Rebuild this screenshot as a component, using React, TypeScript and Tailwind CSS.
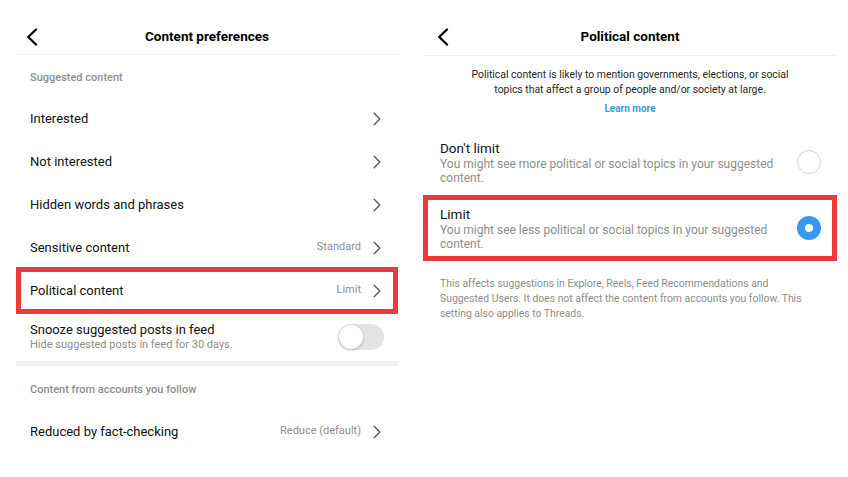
import React from "react";

const Chevron = () => (
  <svg width="8" height="14" viewBox="0 0 8 14" fill="none" className="shrink-0">
    <path d="M1.2 1.2 L6.8 7 L1.2 12.8" stroke="#5a5a5a" strokeWidth="1.4" strokeLinecap="round" strokeLinejoin="round" />
  </svg>
);

const Back = () => (
  <svg width="12" height="18" viewBox="0 0 12 18" fill="none">
    <path d="M10 1.5 L2.2 9 L10 16.5" stroke="#000" strokeWidth="2.3" strokeLinecap="round" strokeLinejoin="round" />
  </svg>
);

function Row({ label, value, highlight }: { label: string; value?: string; highlight?: boolean }) {
  return (
    <div className="relative flex h-[43px] items-center px-[14px]">
      <span className="flex-1 text-[13px] text-[#111]">{label}</span>
      {value && <span className="mr-[12px] text-[11px] text-[#8e8e8e]">{value}</span>}
      <span className="mr-[3px]">
        <Chevron />
      </span>
      {highlight && (
        <span className="pointer-events-none absolute inset-x-0 -inset-y-[2px] border-[5px] border-[#ea3a3f]" />
      )}
    </div>
  );
}

function Left() {
  return (
    <div className="w-[414px] shrink-0 px-4">
      <div className="mt-[18px] grid h-[37px] grid-cols-[40px_1fr_40px] items-center border-b border-[#efefef]">
        <span className="pl-[10px] pt-[2px]">
          <Back />
        </span>
        <span className="pt-[1px] text-center text-[13.5px] font-bold text-black">Content preferences</span>
        <span />
      </div>
      <div className="flex h-[42px] items-center px-[14px] pt-[4px] text-[11px] font-medium text-[#8e8e8e]">
        Suggested content
      </div>
      <Row label="Interested" />
      <Row label="Not interested" />
      <Row label="Hidden words and phrases" />
      <Row label="Sensitive content" value="Standard" />
      <Row label="Political content" value="Limit" highlight />
      <div className="flex h-[49px] items-center px-[14px]">
        <div className="flex flex-1 flex-col">
          <span className="text-[13px] leading-[16px] text-[#111]">Snooze suggested posts in feed</span>
          <span className="text-[11px] leading-[14px] text-[#8e8e8e]">Hide suggested posts in feed for 30 days.</span>
        </div>
        <div className="relative h-[26px] w-[46px] rounded-full bg-[#e3e3e3]">
          <span className="absolute left-[1px] top-[1px] h-[24px] w-[24px] rounded-full bg-white shadow-[0_1px_3px_rgba(0,0,0,0.25)]" />
        </div>
      </div>
      <div className="h-[5px] bg-[#f2f2f2]" />
      <div className="flex h-[44px] items-center px-[14px] pt-[4px] text-[11px] font-medium text-[#8e8e8e]">
        Content from accounts you follow
      </div>
      <Row label="Reduced by fact-checking" value="Reduce (default)" />
    </div>
  );
}

function Option({
  title,
  lines,
  selected,
}: {
  title: string;
  lines: [string, string];
  selected?: boolean;
}) {
  return (
    <div className="relative flex h-[66px] items-center pl-[16px] pr-[15px]">
      <div className="flex flex-1 flex-col">
        <span className="text-[13.5px] leading-[17px] text-[#111]">{title}</span>
        <span className="text-[12px] leading-[14px] text-[#8e8e8e]">
          {lines[0]}
          <br />
          {lines[1]}
        </span>
      </div>
      {selected ? (
        <span className="flex h-[24px] w-[24px] items-center justify-center rounded-full bg-[#3897f0]">
          <span className="h-[8px] w-[8px] rounded-full bg-white" />
        </span>
      ) : (
        <span className="h-[24px] w-[24px] rounded-full border-[1.5px] border-[#d4d4d4]" />
      )}
      {selected && (
        <span className="pointer-events-none absolute -left-[1px] -right-[1px] inset-y-0 border-[5px] border-[#ea3a3f]" />
      )}
    </div>
  );
}

function Right() {
  return (
    <div className="w-[412px] shrink-0">
      <div className="mt-[18px] grid h-[38px] grid-cols-[40px_1fr_40px] items-center border-b border-[#efefef]">
        <span className="pl-[13px]">
          <Back />
        </span>
        <span className="text-center text-[13.5px] font-bold text-black">Political content</span>
        <span />
      </div>
      <div className="pt-[11px] text-center text-[10.4px] leading-[15px] text-[#262626]">
        Political content is likely to mention governments, elections, or social
        <br />
        topics that affect a group of people and/or society at large.
      </div>
      <div className="mt-[4px] text-center text-[10px] font-bold leading-[15px] text-[#3a9ad6]">Learn more</div>
      <div className="mt-[13px]">
        <Option
          title="Don't limit"
          lines={["You might see more political or social topics in your suggested", "content."]}
        />
        <Option
          title="Limit"
          lines={["You might see less political or social topics in your suggested", "content."]}
          selected
        />
      </div>
      <div className="mt-[15px] px-[16px] text-[10.4px] leading-[15px] text-[#8e8e8e]">
        This affects suggestions in Explore, Reels, Feed Recommendations and
        <br />
        Suggested Users. It does not affect the content from accounts you follow. This
        <br />
        setting also applies to Threads.
      </div>
    </div>
  );
}

export default function App() {
  return (
    <div className="flex h-[477px] w-[848px] gap-[10px] overflow-hidden bg-white font-['Roboto',sans-serif] antialiased">
      <Left />
      <Right />
    </div>
  );
}
